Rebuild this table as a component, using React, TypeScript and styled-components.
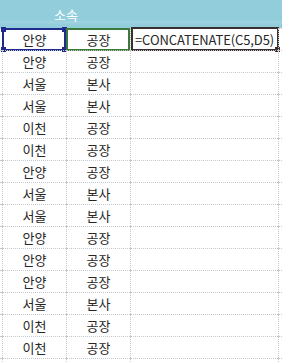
import React from 'react'
import styled, { createGlobalStyle } from 'styled-components'

const GlobalStyle = createGlobalStyle`
  html, body {
    margin: 0;
    padding: 0;
    background: #ffffff;
    overflow: hidden;
  }
  body {
    font-family: "Noto Sans CJK KR", "Noto Sans", sans-serif;
  }
`

const COLS = '2px 64px 64px 148px 4px'
const GRID = '1px dotted #c4c8cc'

const Sheet = styled.div`
  width: 282px;
  height: 363px;
  overflow: hidden;
  display: flex;
  flex-direction: column;
`

const HeaderBand = styled.div`
  height: 28px;
  display: grid;
  grid-template-columns: 130px 152px;
  background: linear-gradient(#92cddc 0, #92cddc 20px, #9fd4e1 22px, #92cddc 25px);
  flex-shrink: 0;
`

const HeaderTitle = styled.div`
  display: flex;
  align-items: center;
  justify-content: center;
  padding-left: 2px;
  color: #ffffff;
  font-size: 13px;
`

const Row = styled.div`
  display: grid;
  grid-template-columns: ${COLS};
  height: 22px;
  flex-shrink: 0;
`

const Cell = styled.div<{ edge?: boolean }>`
  position: relative;
  box-sizing: border-box;
  border-top: ${GRID};
  border-left: ${({ edge }) => (edge ? 'none' : GRID)};
  display: flex;
  align-items: center;
  justify-content: center;
  font-size: 13px;
  color: #262626;
  white-space: nowrap;
`

const SelectFrame = styled.div<{ color: string }>`
  position: absolute;
  inset: -1px 0 -1px -1px;
  border: 2px solid ${({ color }) => color};
  pointer-events: none;
`

const Handle = styled.span<{ top?: boolean; left?: boolean; color: string }>`
  position: absolute;
  width: 5px;
  height: 5px;
  background: ${({ color }) => color};
  ${({ top }) => (top ? 'top: -3px;' : 'bottom: -3px;')}
  ${({ left }) => (left ? 'left: -3px;' : 'right: -3px;')}
`

const EditBox = styled.div`
  position: absolute;
  inset: -2px -1px -1px 0;
  border: 2px solid #3b3030;
  background: #ffffff;
  display: flex;
  align-items: center;
  padding-left: 2px;
  font-size: 13px;
  color: #262626;
  letter-spacing: -0.1px;
`

const rows: [string, string][] = [
  ['안양', '공장'],
  ['안양', '공장'],
  ['서울', '본사'],
  ['서울', '본사'],
  ['이천', '공장'],
  ['이천', '공장'],
  ['안양', '공장'],
  ['서울', '본사'],
  ['서울', '본사'],
  ['안양', '공장'],
  ['안양', '공장'],
  ['안양', '공장'],
  ['서울', '본사'],
  ['이천', '공장'],
  ['이천', '공장'],
  ['', ''],
]

const BLUE = '#1e2a8c'
const GREEN = '#3c7a3c'

export default function App() {
  return (
    <>
      <GlobalStyle />
      <Sheet>
        <HeaderBand>
          <HeaderTitle>소속</HeaderTitle>
          <div />
        </HeaderBand>
        {rows.map(([city, kind], i) => (
          <Row key={i}>
            <Cell edge />
            <Cell>
              {city}
              {i === 0 && (
                <SelectFrame color={BLUE}>
                  <Handle top left color={BLUE} />
                  <Handle top color={BLUE} />
                  <Handle left color={BLUE} />
                  <Handle color={BLUE} />
                </SelectFrame>
              )}
            </Cell>
            <Cell>
              {kind}
              {i === 0 && <SelectFrame color={GREEN} />}
            </Cell>
            <Cell>
              {i === 0 && (
                <EditBox>
                  =CONCATENATE(C5,D5)
                  <Handle color="#3b3030" />
                </EditBox>
              )}
            </Cell>
            <Cell />
          </Row>
        ))}
      </Sheet>
    </>
  )
}
